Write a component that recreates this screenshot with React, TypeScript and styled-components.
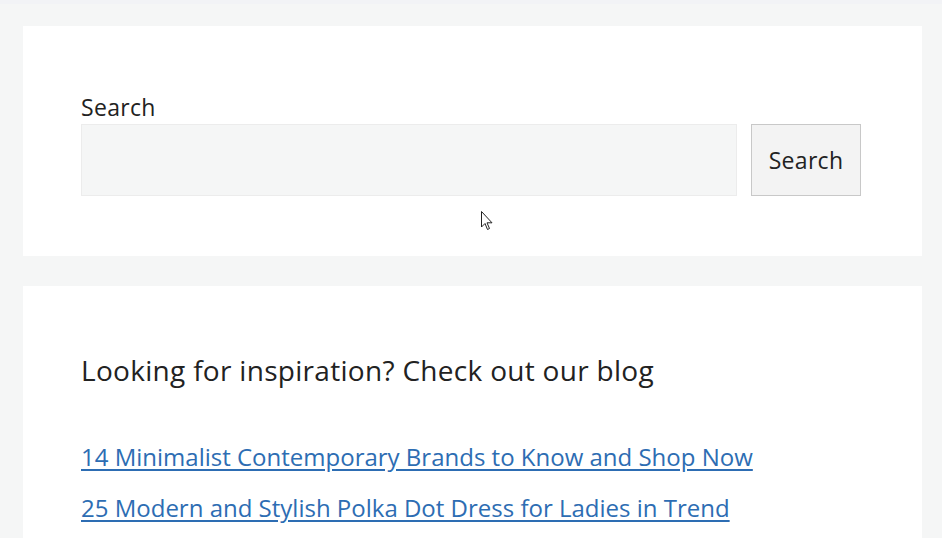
import React from "react";
import styled, { createGlobalStyle } from "styled-components";

const Global = createGlobalStyle`
  html, body { margin: 0; padding: 0; }
  body {
    background: #f5f6f6;
    font-family: "Open Sans", "Noto Sans", sans-serif;
    color: #222;
    overflow: hidden;
  }
`;

const Page = styled.div`
  position: relative;
  display: flex;
  flex-direction: column;
  gap: 30px;
  padding: 22px 20px 0 23px;
  border-top: 4px solid #f2f3f6;
`;

const Card = styled.section<{ $pad: string }>`
  background: #fff;
  padding: ${(p) => p.$pad};
`;

const Label = styled.label`
  display: block;
  font-size: 23px;
  line-height: 30px;
  margin-bottom: 2px;
  letter-spacing: 0.3px;
`;

const Row = styled.div`
  display: flex;
  gap: 14px;
`;

const Input = styled.input`
  flex: 1;
  height: 72px;
  box-sizing: border-box;
  background: #f5f6f6;
  border: 1px solid #ececec;
  outline: none;
`;

const Button = styled.button`
  width: 110px;
  height: 72px;
  box-sizing: border-box;
  background: #f3f3f3;
  border: 1px solid #c8c8c8;
  font-family: inherit;
  font-size: 23px;
  color: #222;
  letter-spacing: 0.3px;
  padding: 0;
`;

const Heading = styled.h2`
  margin: 0 0 48px;
  font-weight: 400;
  font-size: 28px;
  line-height: 40px;
  letter-spacing: 0.3px;
`;

const List = styled.ul`
  list-style: none;
  margin: 0;
  padding: 0;
  display: flex;
  flex-direction: column;
  gap: 13px;
`;

const Link = styled.a`
  font-size: 24px;
  line-height: 38px;
  color: #2d6db3;
  text-decoration: underline;
  text-underline-offset: 3px;
  letter-spacing: 0;
`;

const Cursor = styled.svg`
  position: absolute;
  left: 481px;
  top: 207px;
  pointer-events: none;
`;

export default function App() {
  return (
    <>
      <Global />
      <Page>
        <Card $pad="66px 61px 60px 58px">
          <Label>Search</Label>
          <Row>
            <Input type="text" />
            <Button>Search</Button>
          </Row>
        </Card>
        <Card $pad="64px 61px 60px 58px">
          <Heading>Looking for inspiration? Check out our blog</Heading>
          <List>
            <li><Link href="#">14 Minimalist Contemporary Brands to Know and Shop Now</Link></li>
            <li><Link href="#">25 Modern and Stylish Polka Dot Dress for Ladies in Trend</Link></li>
          </List>
        </Card>
        <Cursor width="13" height="20" viewBox="0 0 13 20">
          <path d="M0.5 0.5 L0.5 16 L4 12.5 L6.5 18.5 L8.5 17.5 L6 11.8 L11 11.8 Z" fill="#fff" stroke="#222" strokeWidth="1" />
        </Cursor>
      </Page>
    </>
  );
}
